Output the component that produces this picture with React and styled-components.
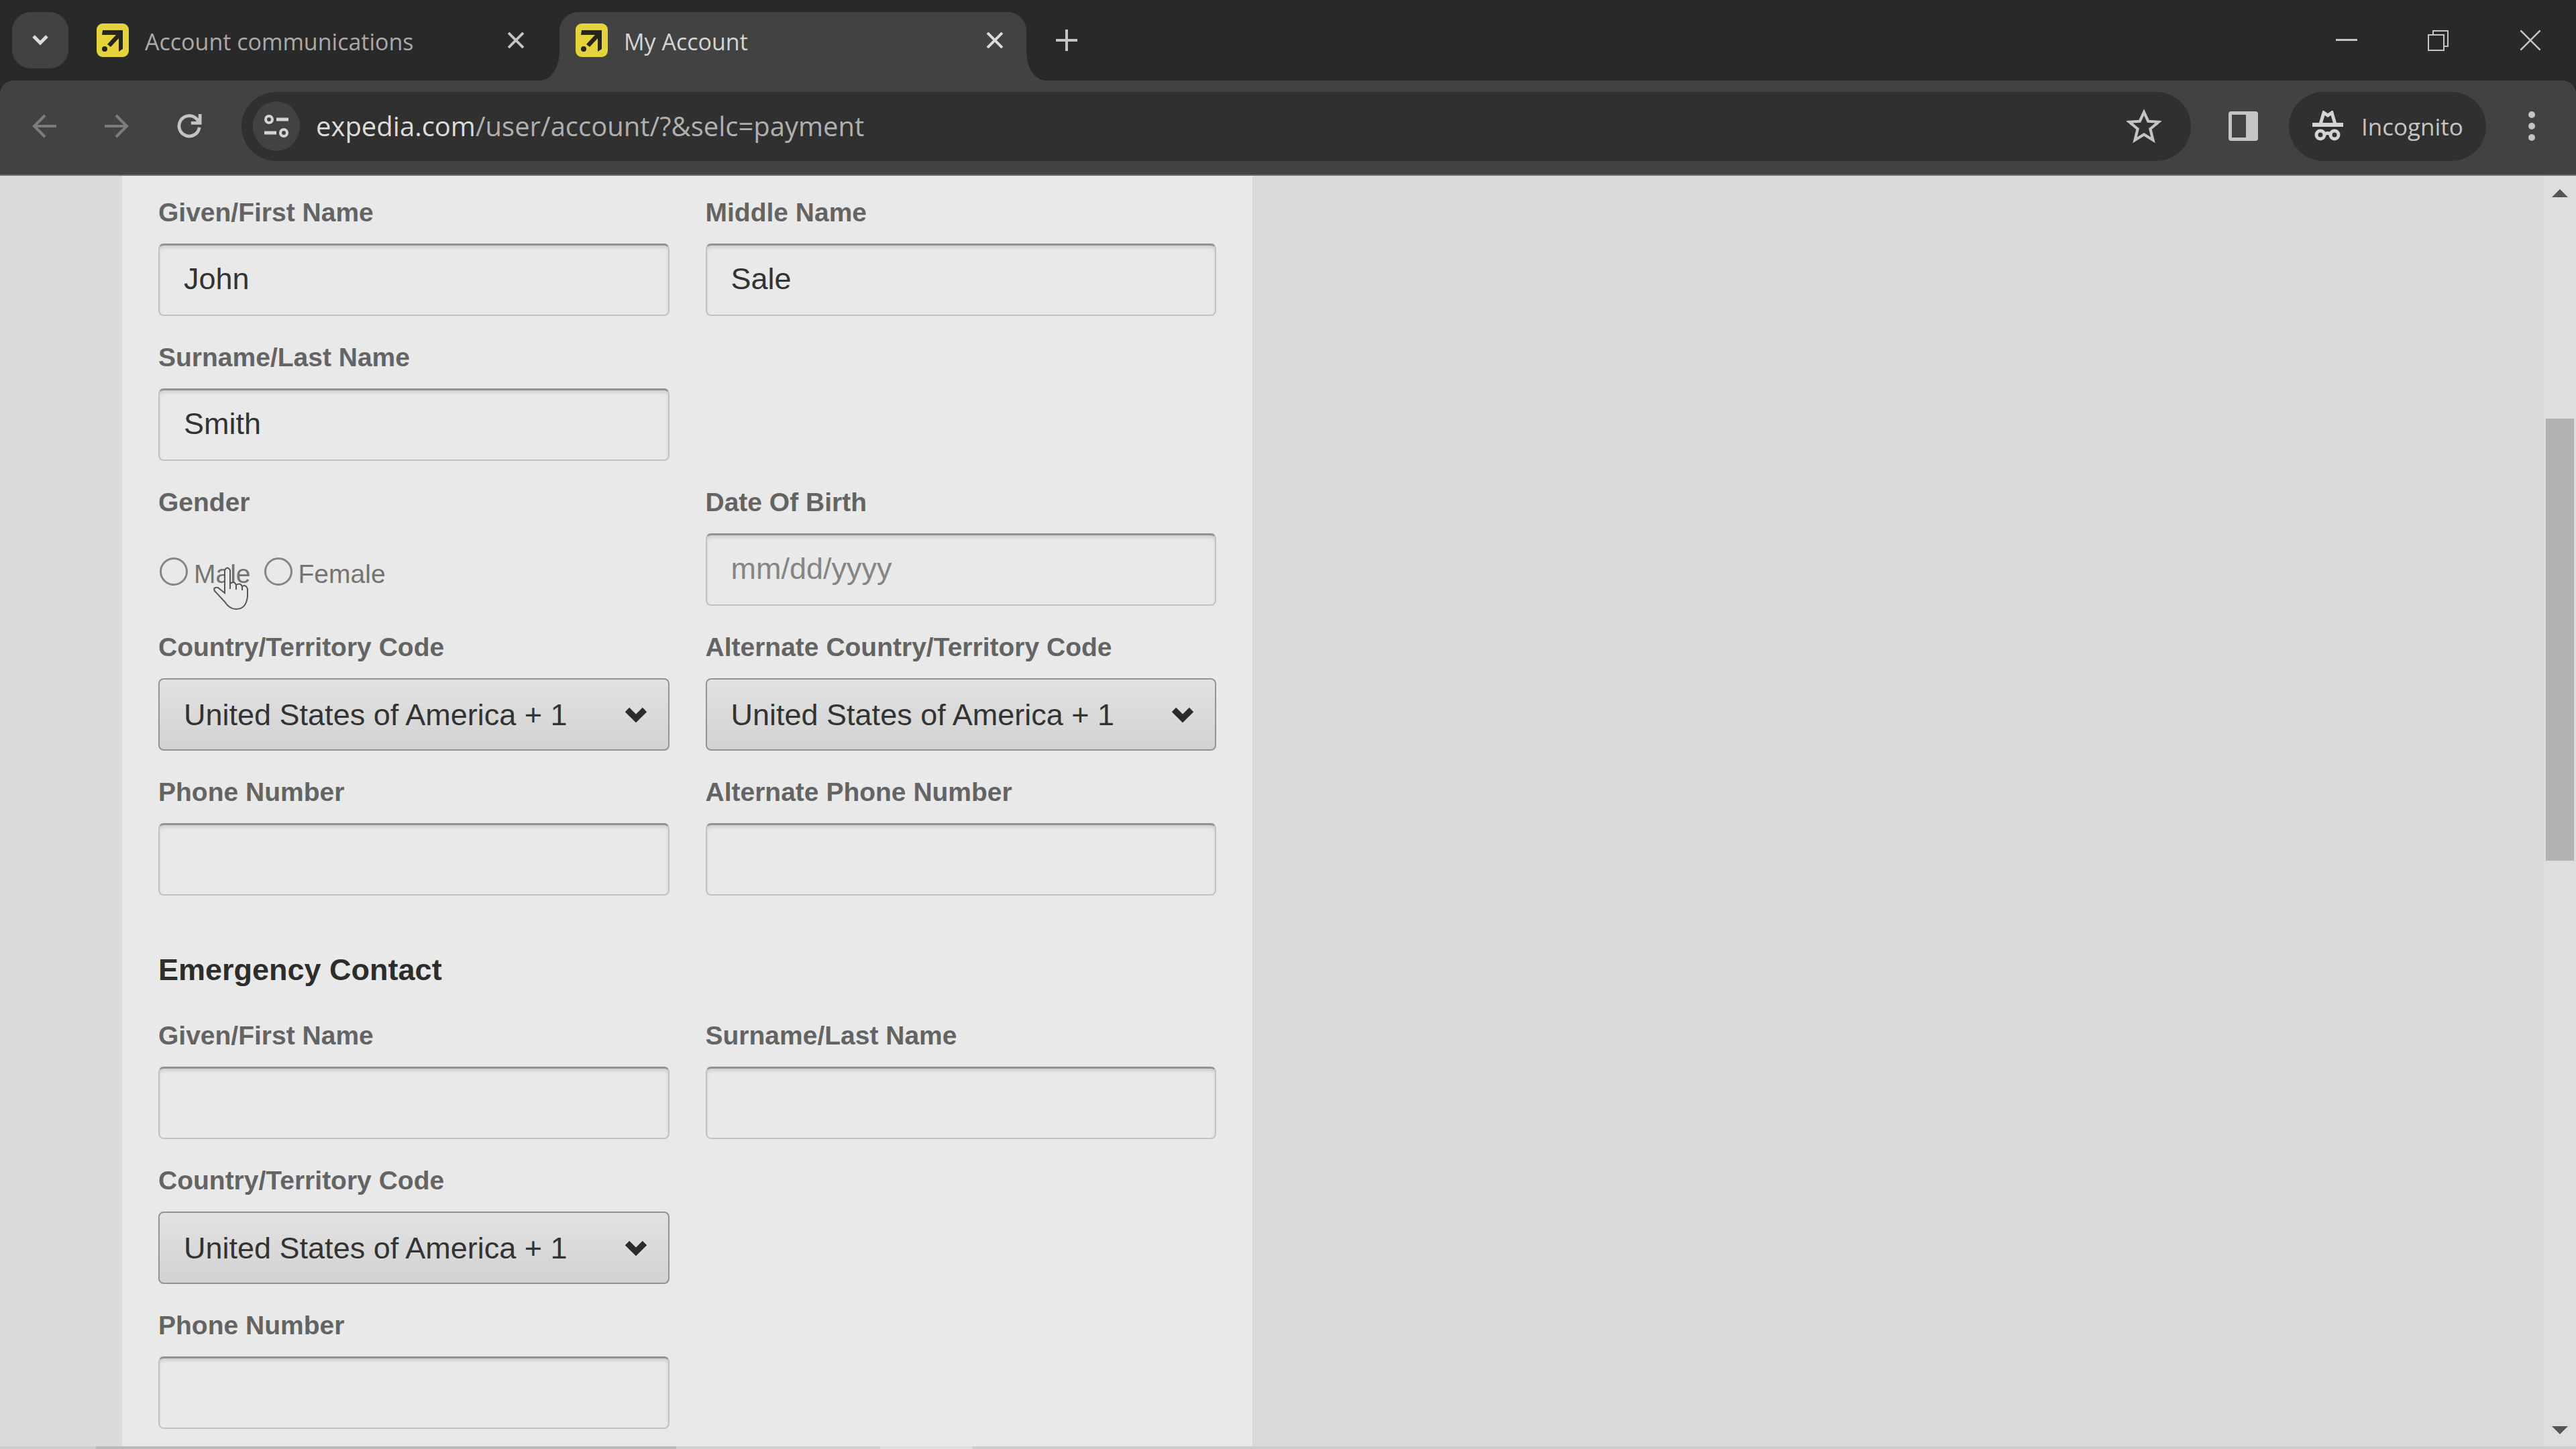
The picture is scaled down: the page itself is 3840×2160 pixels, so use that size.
import React, { useState } from "react";
import styled, { createGlobalStyle } from "styled-components";

const GlobalStyle = createGlobalStyle`
  * {
    box-sizing: border-box;
  }
  body {
    margin: 0;
    background-color: #dadada;
    font-family: "Liberation Sans", Arial, sans-serif;
  }
  button, input, select {
    margin: 0;
    font-family: inherit;
  }
  svg {
    display: block;
    flex: none;
  }
`;

const Browser = styled.div`
  display: flex;
  flex-direction: column;
  height: 100vh;
  overflow: hidden;
`;

const TabStrip = styled.div`
  display: flex;
  align-items: flex-end;
  height: 120px;
  padding-left: 18px;
  background-color: #292929;
  font-family: "Open Sans", "Noto Sans", sans-serif;
`;

const IconButton = styled.button`
  display: flex;
  align-items: center;
  justify-content: center;
  flex: none;
  width: ${(p) => p.$width || 48}px;
  height: ${(p) => p.$height || 48}px;
  padding: 0;
  border: none;
  background-color: transparent;
  color: ${(p) => p.$color || "#c4c4c4"};
`;

const TabSearch = styled(IconButton)`
  align-self: center;
  margin-right: 18px;
  border-radius: 28px;
  background-color: #424242;
`;

const Tabs = styled.div`
  display: flex;
  gap: 18px;
`;

const Tab = styled.div`
  position: relative;
  display: flex;
  align-items: center;
  width: 696px;
  height: 102px;
  padding: 0 23px 18px 24px;
  border-radius: 28px 28px 0 0;
  background-color: ${(p) => (p.$active ? "#424242" : "transparent")};
  color: ${(p) => (p.$active ? "#d4d4d4" : "#a9a9a9")};
`;

/* the curved foot on each side of the open tab */
const Foot = styled.span`
  position: absolute;
  bottom: 0;
  ${(p) => p.$side}: -28px;
  width: 28px;
  height: 42px;
  background: radial-gradient(
    ellipse 28px 42px at ${(p) => p.$side} top,
    transparent 98%,
    #424242 100%
  );
`;

const TabTitle = styled.span`
  flex: 1;
  margin-left: 24px;
  padding-top: 4px;
  font-size: 34px;
  line-height: 48px;
  white-space: nowrap;
`;

const NewTab = styled(IconButton)`
  align-self: center;
  margin-left: 36px;
`;

const WindowControls = styled.div`
  display: flex;
  align-self: stretch;
  align-items: center;
  margin-left: auto;
`;

const ToolbarBack = styled.div`
  background-color: #292929;
`;

const Toolbar = styled.div`
  display: flex;
  align-items: center;
  height: 142px;
  padding: 0 12px 4px;
  border-bottom: 2px solid #6a6a6a;
  border-radius: 20px 20px 0 0;
  background-color: #424242;
  font-family: "Open Sans", "Noto Sans", sans-serif;
`;

const Address = styled.form`
  display: flex;
  flex: 1;
  align-items: center;
  height: 103px;
  margin: 0 24px;
  padding: 0 34px 0 17px;
  border-radius: 52px;
  background-color: #303030;
`;

const SiteInfo = styled(IconButton)`
  border-radius: 50%;
  background-color: #424242;
`;

const Url = styled.div`
  display: flex;
  flex: 1;
  margin-left: 24px;
  color: #b0b0b0;
  font-size: 40px;
  line-height: 56px;
  white-space: nowrap;
`;

const Host = styled.span`
  color: #dcdcdc;
`;

const Incognito = styled.button`
  display: flex;
  align-items: center;
  gap: 27px;
  width: 294px;
  height: 103px;
  margin: 0 14px;
  padding: 0 0 0 35px;
  border: none;
  border-radius: 52px;
  background-color: #303030;
  color: #c4c4c4;
  font-size: 35px;
`;

const Viewport = styled.div`
  display: flex;
  flex: 1;
  min-height: 0;
`;

const Page = styled.main`
  flex: 1;
  overflow: hidden;
  padding-left: 182px;
`;

const Panel = styled.form`
  min-height: 100%;
  max-width: 1685px;
  padding: 32px 54px 26px;
  background-color: #e9e9e9;
`;

const Grid = styled.div`
  display: grid;
  grid-template-columns: 1fr 1fr;
  gap: 39px 54px;
`;

const Field = styled.div`
  grid-column: ${(p) => p.$column || "auto"};
  min-width: 0;
`;

const labelText = `
  display: block;
  height: 46px;
  margin: 0 0 23px;
  padding: 0;
  color: #646464;
  font-size: 39px;
  font-weight: bold;
  line-height: 46px;
  white-space: nowrap;
`;

const Label = styled.label`
  ${labelText}
`;

const Fieldset = styled.fieldset`
  grid-column: 1;
  min-width: 0;
  margin: 0;
  padding: 0;
  border: none;
`;

const Legend = styled.legend`
  ${labelText}
`;

const Input = styled.input`
  display: block;
  width: 100%;
  height: 108px;
  padding: 0 36px 3px;
  border: 2px solid #c2c2c2;
  border-top: 3px solid #929292;
  border-radius: 8px;
  outline: none;
  background-color: #e9e9e9;
  box-shadow: inset 0 4px 4px rgba(0, 0, 0, 0.1);
  color: #333;
  font-size: 45px;

  &::placeholder {
    color: #858585;
    opacity: 1;
  }
`;

const SelectWrap = styled.div`
  position: relative;
`;

const Select = styled.select`
  display: block;
  width: 100%;
  height: 108px;
  padding: 0 90px 0 36px;
  border: 2px solid #939393;
  border-radius: 8px;
  outline: none;
  appearance: none;
  background: linear-gradient(#e2e2e2, #d2d2d2);
  color: #333;
  font-size: 45px;
`;

const SelectArrow = styled.svg`
  position: absolute;
  top: 42px;
  right: 32px;
  pointer-events: none;
`;

const Radios = styled.div`
  display: flex;
  gap: 20px;
  padding: 37px 0 0 2px;
`;

const RadioLabel = styled.label`
  display: flex;
  align-items: center;
  gap: 9px;
  height: 48px;
  color: #747474;
  font-size: 39px;
  line-height: 48px;
`;

const Radio = styled.input`
  width: 42px;
  height: 42px;
  margin-bottom: 8px;
  border: 3px solid #858585;
  border-radius: 50%;
  appearance: none;
`;

const RadioText = styled.span`
  position: relative;
`;

const Pointer = styled.svg`
  position: absolute;
  top: 12px;
  left: 28px;
`;

const Heading = styled.h2`
  margin: 85px 0 49px;
  color: #2d2d2d;
  font-size: 45px;
  line-height: 52px;
`;

const Scrollbar = styled.div`
  display: flex;
  flex-direction: column;
  align-items: center;
  flex: none;
  width: 48px;
  padding: 20px 0 18px;
  background-color: #dedede;
`;

const Track = styled.div`
  flex: 1;
  width: 42px;
  padding-top: 330px;
`;

const Thumb = styled.div`
  width: 42px;
  height: 659px;
  background-color: #b2b2b2;
`;

/* sliver of the taskbar under the window */
const BottomEdge = styled.div`
  flex: none;
  height: 4px;
  background: linear-gradient(
    to right,
    #cccccc 143px,
    #bababa 143px 1008px,
    #cfcfcf 1008px 1312px,
    #e0e0e0 1312px 1449px,
    #cccccc 1449px
  );
`;

const Favicon = () => (
  <svg width="48" height="50" viewBox="0 0 48 50">
    <rect width="48" height="50" rx="9" fill="#e3d43b" />
    <path d="M9 10H39V38L33 42V22L21 35L16 31L29 17H8Z" fill="#25241f" />
    <circle cx="12" cy="38" r="4" fill="#25241f" />
  </svg>
);

const Cross = ({ size = 24, thickness = 4 }) => (
  <svg width={size} height={size} viewBox="0 0 24 24" stroke="currentColor" strokeWidth={thickness}>
    <path d="M1 1L23 23M23 1L1 23" />
  </svg>
);

const Star = () => (
  <svg width="52" height="50" viewBox="0 0 50 48" fill="none" stroke="#c4c4c4" strokeWidth="4">
    <path d="M25 4L31 17L46 18L34 28L38 44L25 36L12 44L16 28L4 18L19 17Z" />
  </svg>
);

const Spy = () => (
  <svg width="46" height="46" viewBox="0 0 46 46" fill="none" stroke="#d4d4d4" strokeWidth="5">
    <path d="M12 20L17 3L23 7L29 3L34 20" />
    <path d="M0 21H46" strokeWidth="6" />
    <circle cx="12" cy="36" r="6" />
    <circle cx="33" cy="36" r="6" />
    <path d="M18 35Q23 32 27 35" />
  </svg>
);

const TextField = ({ id, label, value, placeholder, column }) => {
  const [text, setText] = useState(value || "");
  return (
    <Field $column={column}>
      <Label htmlFor={id}>{label}</Label>
      <Input
        id={id}
        type="text"
        value={text}
        placeholder={placeholder}
        autoComplete="off"
        onChange={(e) => setText(e.target.value)}
      />
    </Field>
  );
};

const CountryField = ({ id, label, column }) => (
  <Field $column={column}>
    <Label htmlFor={id}>{label}</Label>
    <SelectWrap>
      <Select id={id} defaultValue="us">
        <option value="us">United States of America + 1</option>
      </Select>
      <SelectArrow width="36" height="25" viewBox="0 0 36 25">
        <path d="M5 5L18 18L31 5" fill="none" stroke="#2b2b2b" strokeWidth="9" />
      </SelectArrow>
    </SelectWrap>
  </Field>
);

export default function App() {
  const [gender, setGender] = useState("");
  const handleGender = (e) => setGender(e.target.value);

  return (
    <Browser>
      <GlobalStyle />
      <TabStrip>
        <TabSearch $width={84} $height={84} aria-label="Search tabs">
          <svg width="24" height="16" viewBox="0 0 24 16" fill="none" stroke="#dcdcdc" strokeWidth="5">
            <path d="M2 2L12 12L22 2" />
          </svg>
        </TabSearch>
        <Tabs>
          <Tab>
            <Favicon />
            <TabTitle>Account communications</TabTitle>
            <IconButton aria-label="Close tab"><Cross /></IconButton>
          </Tab>
          <Tab $active>
            <Foot $side="left" />
            <Favicon />
            <TabTitle>My Account</TabTitle>
            <IconButton $color="#dcdcdc" aria-label="Close tab"><Cross /></IconButton>
            <Foot $side="right" />
          </Tab>
        </Tabs>
        <NewTab aria-label="New tab">
          <svg width="32" height="32" viewBox="0 0 32 32" stroke="currentColor" strokeWidth="4">
            <path d="M16 0V32M0 16H32" />
          </svg>
        </NewTab>
        <WindowControls>
          <IconButton $width={137} $height={120} aria-label="Minimize">
            <svg width="32" height="4" viewBox="0 0 32 4" fill="#c4c4c4"><rect width="32" height="3" /></svg>
          </IconButton>
          <IconButton $width={137} $height={120} aria-label="Restore">
            <svg width="32" height="32" viewBox="0 0 32 32" fill="none" stroke="#c4c4c4" strokeWidth="2">
              <path d="M1 8H24V31H1ZM8 8V2H30V25H24" />
            </svg>
          </IconButton>
          <IconButton $width={137} $height={120} aria-label="Close">
            <Cross size={32} thickness={2} />
          </IconButton>
        </WindowControls>
      </TabStrip>

      <ToolbarBack>
        <Toolbar>
          <IconButton $width={108} $color="#7c7c7c" aria-label="Back">
            <svg width="36" height="36" viewBox="0 0 36 36" fill="none" stroke="currentColor" strokeWidth="4">
              <path d="M19 2L3 18L19 34M3 18H36" />
            </svg>
          </IconButton>
          <IconButton $width={108} $color="#7c7c7c" aria-label="Forward">
            <svg width="36" height="36" viewBox="0 0 36 36" fill="none" stroke="currentColor" strokeWidth="4">
              <path d="M17 2L33 18L17 34M33 18H0" />
            </svg>
          </IconButton>
          <IconButton $width={108} aria-label="Reload">
            <svg width="38" height="38" viewBox="0 0 40 40" fill="none" stroke="currentColor" strokeWidth="5">
              <path d="M36 22A16 16 0 1 1 32 9L36 14M37 1V15H23" />
            </svg>
          </IconButton>
          <Address>
            <SiteInfo $width={70} $height={74} type="button" aria-label="Site information">
              <svg width="36" height="36" viewBox="0 0 36 36" fill="none" stroke="#d4d4d4" strokeWidth="4">
                <circle cx="7" cy="8" r="5" />
                <circle cx="29" cy="28" r="5" />
                <path d="M18 8H36M0 28H18" strokeWidth="5" />
              </svg>
            </SiteInfo>
            <Url><Host>expedia.com</Host>/user/account/?&amp;selc=payment</Url>
            <IconButton $width={72} type="button" aria-label="Bookmark"><Star /></IconButton>
          </Address>
          <IconButton $width={108} aria-label="Side panel">
            <svg width="44" height="44" viewBox="0 0 44 44">
              <path
                d="M4 0H40Q44 0 44 4V40Q44 44 40 44H4Q0 44 0 40V4Q0 0 4 0ZM5 5V39H26V5Z"
                fill="currentColor"
                fillRule="evenodd"
              />
            </svg>
          </IconButton>
          <Incognito><Spy />Incognito</Incognito>
          <IconButton $width={108} aria-label="Menu">
            <svg width="10" height="44" viewBox="0 0 10 44" fill="currentColor">
              <circle cx="5" cy="5" r="5" />
              <circle cx="5" cy="22" r="5" />
              <circle cx="5" cy="39" r="5" />
            </svg>
          </IconButton>
        </Toolbar>
      </ToolbarBack>

      <Viewport>
        <Page>
          <Panel>
            <Grid>
              <TextField id="first" label="Given/First Name" value="John" />
              <TextField id="middle" label="Middle Name" value="Sale" />
              <TextField id="last" label="Surname/Last Name" value="Smith" column="1" />
              <Fieldset>
                <Legend>Gender</Legend>
                <Radios>
                  <RadioLabel>
                    <Radio type="radio" name="gender" value="male" checked={gender === "male"} onChange={handleGender} />
                    <RadioText>
                      Male
                      <Pointer width="54" height="66" viewBox="0 0 54 66">
                        <path
                          d="M18 6Q22 -1 26 6V26Q32 21 35 28Q41 24 44 30Q50 27 52 34V45Q50 64 35 64Q25 64 18 53L3 37Q0 31 8 32L18 40Z"
                          fill="#e9e9e9"
                          stroke="#555"
                          strokeWidth="2"
                        />
                        <path d="M26 24V34M35 27V35M44 29V36" stroke="#555" strokeWidth="2" />
                      </Pointer>
                    </RadioText>
                  </RadioLabel>
                  <RadioLabel>
                    <Radio type="radio" name="gender" value="female" checked={gender === "female"} onChange={handleGender} />
                    <RadioText>Female</RadioText>
                  </RadioLabel>
                </Radios>
              </Fieldset>
              <TextField id="birth" label="Date Of Birth" placeholder="mm/dd/yyyy" />
              <CountryField id="country" label="Country/Territory Code" />
              <CountryField id="alt-country" label="Alternate Country/Territory Code" />
              <TextField id="phone" label="Phone Number" />
              <TextField id="alt-phone" label="Alternate Phone Number" />
            </Grid>
            <Heading>Emergency Contact</Heading>
            <Grid>
              <TextField id="em-first" label="Given/First Name" />
              <TextField id="em-last" label="Surname/Last Name" />
              <CountryField id="em-country" label="Country/Territory Code" column="1" />
              <TextField id="em-phone" label="Phone Number" column="1" />
            </Grid>
          </Panel>
        </Page>
        <Scrollbar>
          <svg width="24" height="12" viewBox="0 0 24 12" fill="#555"><path d="M12 0L24 12H0Z" /></svg>
          <Track><Thumb /></Track>
          <svg width="24" height="12" viewBox="0 0 24 12" fill="#555"><path d="M0 0H24L12 12Z" /></svg>
        </Scrollbar>
      </Viewport>
      <BottomEdge />
    </Browser>
  );
}
